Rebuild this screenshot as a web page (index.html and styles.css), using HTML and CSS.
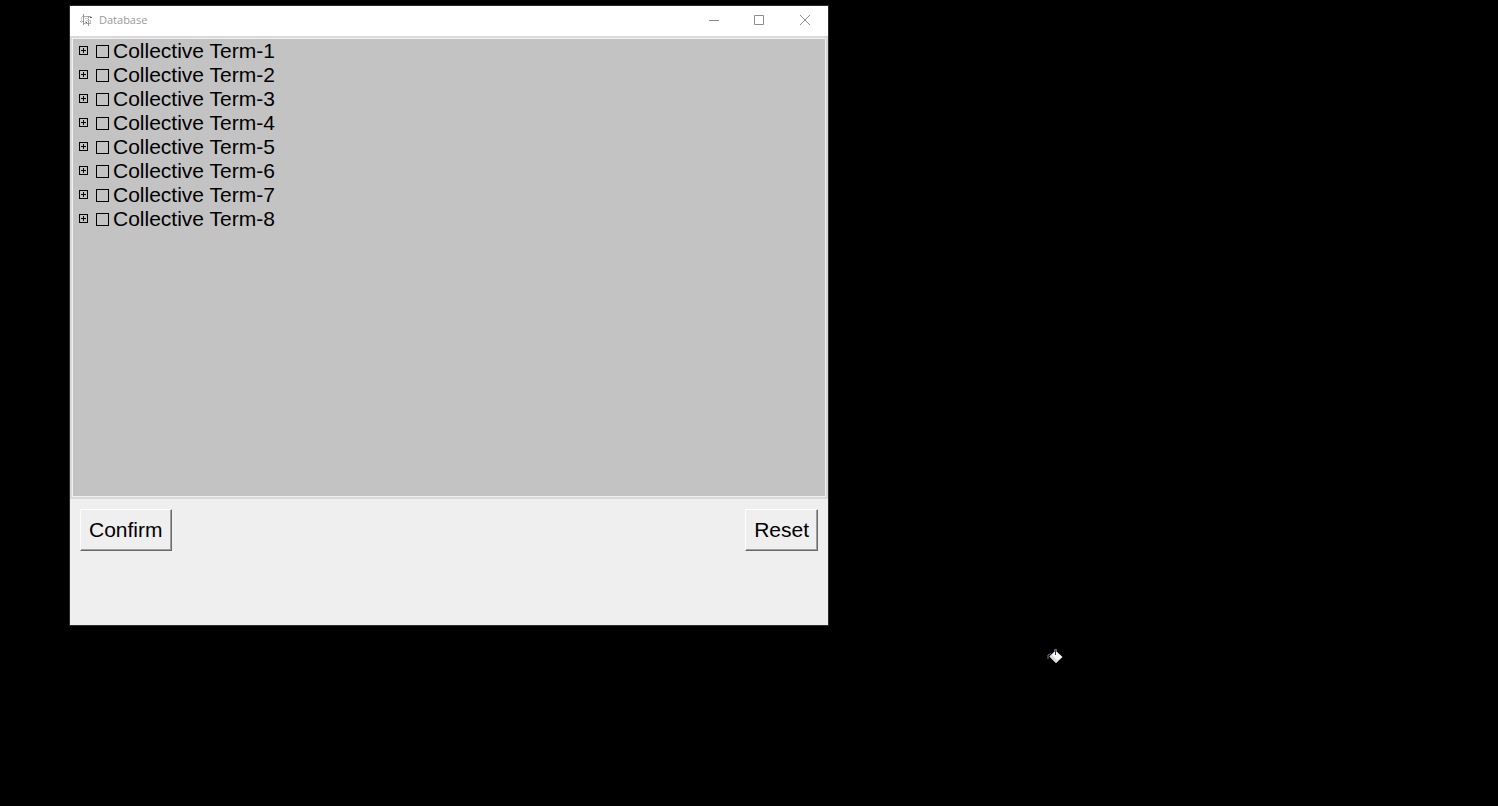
FILE: index.html
```html
<!DOCTYPE html>
<html lang="en">
<head>
  <meta charset="UTF-8">
  <meta name="viewport" content="width=device-width, initial-scale=1.0">
  <title>Database</title>
  <link rel="stylesheet" href="styles.css">
</head>
<body>
  <main class="window">
    <header class="titlebar">
      <svg class="app-icon" width="13" height="13" viewBox="0 0 13 13" fill="none" stroke="#aaa">
        <path d="M2 2.500h9M0 7.500h4M3 9.500h8"/>
        <path stroke="#999" d="M3.500 0v11M8.500 2v10"/>
        <path stroke="#bcd3dc" d="M1.500 3v6M5 4.500h4M5.500 7v3"/>
        <path stroke="#d8c3a2" d="M6 6.500h5M10.500 6v3"/>
        <path stroke="#555" d="M10 3.500h2M6 8.500h1"/>
      </svg>
      <h1>Database</h1>
      <div class="controls">
        <button type="button" aria-label="Minimize">
          <svg width="11" height="11" viewBox="0 0 11 11"><path d="M1 5.5h10"/></svg>
        </button>
        <button type="button" aria-label="Maximize">
          <svg width="11" height="11" viewBox="0 0 11 11"><path d="M.5 .5h9v9h-9z"/></svg>
        </button>
        <button type="button" aria-label="Close">
          <svg width="11" height="11" viewBox="0 0 11 11"><path d="M0 0l10 10M10 0l-10 10"/></svg>
        </button>
      </div>
    </header>

    <ul class="tree">
      <li>
        <button type="button" class="expand" aria-label="Expand"></button>
        <input type="checkbox" id="term1"><label for="term1">Collective Term-1</label>
      </li>
      <li>
        <button type="button" class="expand" aria-label="Expand"></button>
        <input type="checkbox" id="term2"><label for="term2">Collective Term-2</label>
      </li>
      <li>
        <button type="button" class="expand" aria-label="Expand"></button>
        <input type="checkbox" id="term3"><label for="term3">Collective Term-3</label>
      </li>
      <li>
        <button type="button" class="expand" aria-label="Expand"></button>
        <input type="checkbox" id="term4"><label for="term4">Collective Term-4</label>
      </li>
      <li>
        <button type="button" class="expand" aria-label="Expand"></button>
        <input type="checkbox" id="term5"><label for="term5">Collective Term-5</label>
      </li>
      <li>
        <button type="button" class="expand" aria-label="Expand"></button>
        <input type="checkbox" id="term6"><label for="term6">Collective Term-6</label>
      </li>
      <li>
        <button type="button" class="expand" aria-label="Expand"></button>
        <input type="checkbox" id="term7"><label for="term7">Collective Term-7</label>
      </li>
      <li>
        <button type="button" class="expand" aria-label="Expand"></button>
        <input type="checkbox" id="term8"><label for="term8">Collective Term-8</label>
      </li>
    </ul>

    <div class="actions">
      <button type="button">Confirm</button>
      <button type="button">Reset</button>
    </div>
  </main>

  <!-- paint bucket pointer -->
  <svg class="pointer" width="17" height="16" viewBox="0 0 17 16">
    <path d="M2.500 8.500L8.500 2.500 15.500 9 9 15z" fill="#f8f8f4"/>
    <path d="M2.500 8.500L9 15l2-2-6.500-6.500z" fill="#d5dcde"/>
    <path d="M7.500 4V1.500h2V4" fill="none" stroke="#777"/>
    <path d="M8.500 3v4" stroke="#123a66"/>
    <path d="M1 11V7l3-1.500" fill="none" stroke="#777"/>
  </svg>
</body>
</html>
```

FILE: styles.css
```css
* {
  box-sizing: border-box;
}
body {
  margin: 0;
  padding: 6px 70px;
  background: #000;
  font-family: "Liberation Sans", Arial, sans-serif;
  font-size: 21px;
  line-height: 24px;
  color: #000;
}
.window {
  max-width: 758px;
  padding-bottom: 74px;
  background: #efefef;
  outline: 1px solid #2b2b2b;
}
.titlebar {
  display: flex;
  align-items: center;
  height: 30px;
  padding: 0 0 2px 10px;
  background: #fff;
}
.titlebar h1 {
  flex: 1;
  margin: 0 0 0 6px;
  font-family: "Open Sans", "Noto Sans", sans-serif;
  font-size: 11px;
  font-weight: normal;
  color: #999;
}
.controls {
  display: flex;
}
.controls button {
  display: flex;
  align-items: center;
  justify-content: center;
  width: 46px;
  height: 27px;
  padding: 0;
  border: none;
  background: none;
}
.controls path {
  fill: none;
  stroke: #8c8c8c;
}
.tree {
  min-height: 463px;
  margin: 0;
  padding: 1px 0 0 6px;
  border: 2px solid #d9d9d9;
  background: #c3c3c3;
  box-shadow: inset 0 0 0 1px #f0f0f0;
  list-style: none;
}
.tree li {
  display: flex;
  align-items: center;
  height: 24px;
}
.expand {
  width: 9px;
  height: 9px;
  margin: 0 8px 2px 1px;
  padding: 0;
  border: 1px solid #000;
  background:
    linear-gradient(#000, #000) center / 5px 1px no-repeat,
    linear-gradient(#000, #000) center / 1px 5px no-repeat;
}
.tree input {
  appearance: none;
  width: 13px;
  height: 13px;
  margin: 0 4px 0 0;
  border: 1px solid #000;
}
.tree input:checked {
  background: #000;
}
.actions {
  display: flex;
  justify-content: space-between;
  padding: 10px 10px 0;
}
.actions button {
  padding: 8px;
  border: 1px solid;
  border-color: #fff #696969 #696969 #fff;
  background: #efefef;
  box-shadow: inset -1px -1px #a0a0a0;
  font: inherit;
  color: #000;
}
.pointer {
  position: absolute;
  left: 1047px;
  top: 648px;
}
```
